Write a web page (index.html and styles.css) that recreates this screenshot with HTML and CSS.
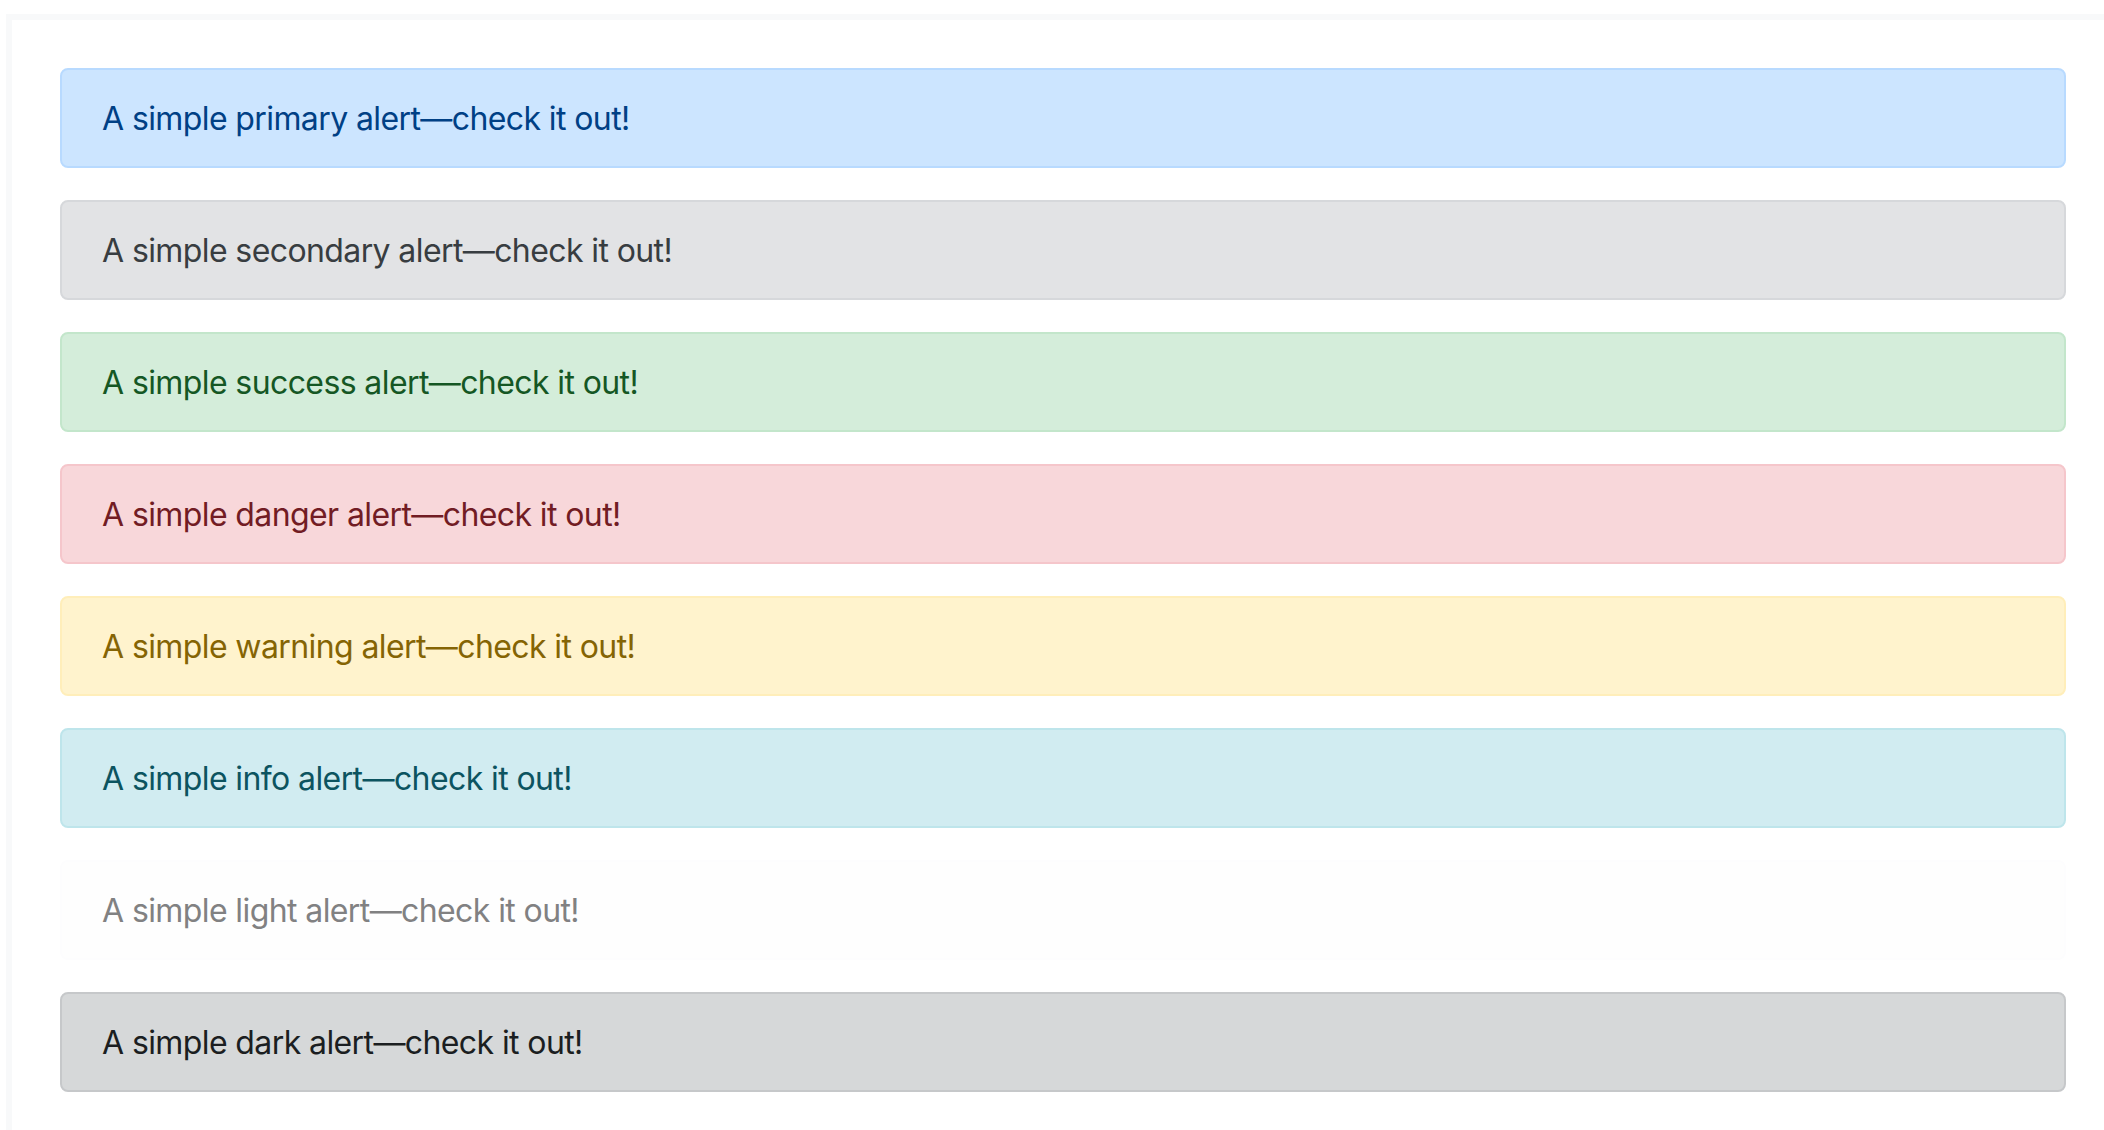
FILE: index.html
```html
<!DOCTYPE html>
<html lang="en">
<head>
<meta charset="utf-8">
<title>Alerts</title>
<link rel="stylesheet" href="styles.css">
</head>
<body>
<div class="example">
  <div class="alert alert-primary">A simple primary alert—check it out!</div>
  <div class="alert alert-secondary">A simple secondary alert—check it out!</div>
  <div class="alert alert-success">A simple success alert—check it out!</div>
  <div class="alert alert-danger">A simple danger alert—check it out!</div>
  <div class="alert alert-warning">A simple warning alert—check it out!</div>
  <div class="alert alert-info">A simple info alert—check it out!</div>
  <div class="alert alert-light">A simple light alert—check it out!</div>
  <div class="alert alert-dark">A simple dark alert—check it out!</div>
</div>
</body>
</html>
```
FILE: styles.css
```css
html, body {
  margin: 0;
  overflow: hidden;
  background: #fff;
}
body {
  padding: 14px 0 0 6px;
  font-family: "Inter", "Roboto", "Liberation Sans", sans-serif;
  font-size: 32px;
  line-height: 48px;
  letter-spacing: -0.6px;
  color: #212529;
}
.example {
  box-sizing: border-box;
  width: 2114px;
  border: 6px solid #f8f9fa;
  border-bottom: 0;
  padding: 48px 48px 48px 48px;
}
.alert {
  border: 2px solid transparent;
  border-radius: 8px;
  padding: 25px 40px 23px;
  margin-bottom: 32px;
}
.alert:last-child { margin-bottom: 0; }
.alert-primary { color: #004085; background: #cce5ff; border-color: #b8daff; }
.alert-secondary { color: #383d41; background: #e2e3e5; border-color: #d6d8db; }
.alert-success { color: #155724; background: #d4edda; border-color: #c3e6cb; }
.alert-danger { color: #721c24; background: #f8d7da; border-color: #f5c6cb; }
.alert-warning { color: #856404; background: #fff3cd; border-color: #ffeeba; }
.alert-info { color: #0c5460; background: #d1ecf1; border-color: #bee5eb; }
.alert-light { color: #818182; background: #fefefe; border-color: #fdfdfe; }
.alert-dark { color: #1b1e21; background: #d6d8d9; border-color: #c6c8ca; }
```
